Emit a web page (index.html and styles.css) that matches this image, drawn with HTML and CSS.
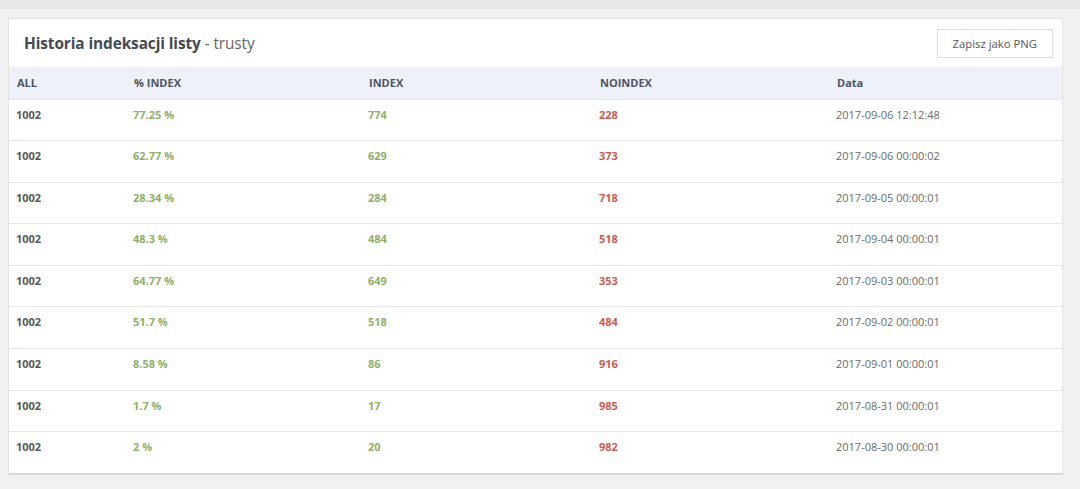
FILE: index.html
```html
<!DOCTYPE html>
<html lang="pl">
<head>
<meta charset="utf-8">
<title>Historia indeksacji listy</title>
<link rel="stylesheet" href="styles.css">
</head>
<body>
<div class="topbar"></div>
<main class="page">
  <section class="card">
    <header class="card-head">
      <h2 class="card-title">Historia indeksacji listy <span class="sub">- trusty</span></h2>
      <button class="btn">Zapisz jako PNG</button>
    </header>
    <table class="tbl">
      <colgroup>
        <col class="c1"><col class="c2"><col class="c3"><col class="c4"><col class="c5">
      </colgroup>
      <thead>
        <tr><th>ALL</th><th>% INDEX</th><th>INDEX</th><th>NOINDEX</th><th>Data</th></tr>
      </thead>
      <tbody>
        <tr><td class="all">1002</td><td class="ok">77.25 %</td><td class="ok">774</td><td class="bad">228</td><td class="date">2017-09-06 12:12:48</td></tr>
        <tr><td class="all">1002</td><td class="ok">62.77 %</td><td class="ok">629</td><td class="bad">373</td><td class="date">2017-09-06 00:00:02</td></tr>
        <tr><td class="all">1002</td><td class="ok">28.34 %</td><td class="ok">284</td><td class="bad">718</td><td class="date">2017-09-05 00:00:01</td></tr>
        <tr><td class="all">1002</td><td class="ok">48.3 %</td><td class="ok">484</td><td class="bad">518</td><td class="date">2017-09-04 00:00:01</td></tr>
        <tr><td class="all">1002</td><td class="ok">64.77 %</td><td class="ok">649</td><td class="bad">353</td><td class="date">2017-09-03 00:00:01</td></tr>
        <tr><td class="all">1002</td><td class="ok">51.7 %</td><td class="ok">518</td><td class="bad">484</td><td class="date">2017-09-02 00:00:01</td></tr>
        <tr><td class="all">1002</td><td class="ok">8.58 %</td><td class="ok">86</td><td class="bad">916</td><td class="date">2017-09-01 00:00:01</td></tr>
        <tr><td class="all">1002</td><td class="ok">1.7 %</td><td class="ok">17</td><td class="bad">985</td><td class="date">2017-08-31 00:00:01</td></tr>
        <tr><td class="all">1002</td><td class="ok">2 %</td><td class="ok">20</td><td class="bad">982</td><td class="date">2017-08-30 00:00:01</td></tr>
      </tbody>
    </table>
  </section>
</main>
</body>
</html>
```
FILE: styles.css
```css
* { box-sizing: border-box; }
html, body { margin: 0; padding: 0; }
body {
  background: #f1f1f1;
  font-family: "Open Sans", "Liberation Sans", Arial, sans-serif;
  color: #555;
  height: 489px;
  overflow: hidden;
}
.topbar {
  height: 9px;
  background: #e8e8e8;
}
.page {
  padding: 9px 18px 0 8px;
}
.card {
  background: #fff;
  border: 1px solid #e3e3e3;
  border-bottom: 2px solid #d9d9d9;
  width: 1055px;
}
.card-head {
  height: 48px;
  display: flex;
  align-items: center;
  justify-content: space-between;
  padding: 0 9px 0 15px;
}
.card-title {
  margin: 0;
  font-size: 15.4px;
  font-weight: 700;
  color: #444a50;
  letter-spacing: -0.1px;
}
.card-title .sub {
  font-weight: 400;
  color: #666;
}
.btn {
  font-family: inherit;
  font-size: 11.3px;
  color: #555;
  background: #fff;
  border: 1px solid #dcdcdc;
  height: 29px;
  padding: 0 15px;
  cursor: pointer;
}
.tbl {
  width: 100%;
  border-collapse: collapse;
  table-layout: fixed;
}
.c1 { width: 117px; }
.c2 { width: 235px; }
.c3 { width: 231px; }
.c4 { width: 237px; }
.c5 { width: auto; }
.tbl thead tr {
  background: #eef2f8;
}
.tbl th {
  height: 32px;
  text-align: left;
  font-size: 11px;
  font-weight: 700;
  color: #4d5466;
  padding: 0 8px;
  border-bottom: 1px solid #e3e8ee;
}
.tbl td {
  height: 41.6px;
  vertical-align: top;
  padding: 7px 7px 0;
  font-size: 11px;
  border-top: 1px solid #e6e6e6;
}
.tbl tbody tr:first-child td { border-top: none; }
.all { font-weight: 700; color: #585858; }
.ok { font-weight: 700; color: #8fb068; }
.bad { font-weight: 700; color: #d05a4f; }
.date { color: #6a6a6a; font-size: 11.5px; }
```
